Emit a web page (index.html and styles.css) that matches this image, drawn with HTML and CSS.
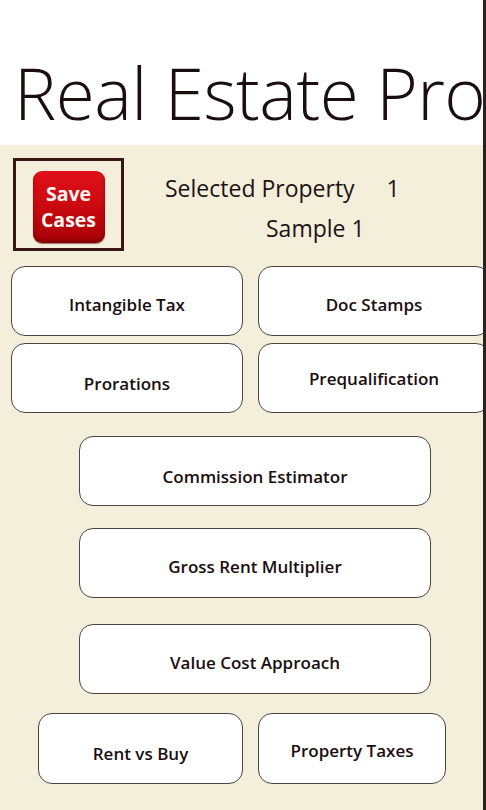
FILE: index.html
```html
<!DOCTYPE html>
<html lang="en">
<head>
  <meta charset="UTF-8" />
  <meta name="viewport" content="width=device-width, initial-scale=1.0"/>
  <title>Real Estate Pro</title>
  <link rel="stylesheet" href="styles.css">
</head>
<body>

  <div class="app">
    <!-- Page title -->
    <header class="title-bar">
      <h1 class="app-title">Real Estate Pro</h1>
    </header>

    <div class="content">
      <!-- Save button and selected property -->
      <div class="top-row">
        <div class="save-frame">
          <button class="save-btn">Save<br>Cases</button>
        </div>
        <div class="property-info">
          <div class="property-line">
            <span>Selected Property</span>
            <span class="property-num">1</span>
          </div>
          <div class="property-name">Sample 1</div>
        </div>
      </div>

      <!-- Calculators -->
      <div class="btn-row row-1">
        <button class="calc-btn half">Intangible Tax</button>
        <button class="calc-btn half">Doc Stamps</button>
      </div>

      <div class="btn-row row-2">
        <button class="calc-btn half low">Prorations</button>
        <button class="calc-btn half high">Prequalification</button>
      </div>

      <div class="btn-row row-3">
        <button class="calc-btn wide low">Commission Estimator</button>
      </div>

      <div class="btn-row row-4">
        <button class="calc-btn wide">Gross Rent Multiplier</button>
      </div>

      <div class="btn-row row-5">
        <button class="calc-btn wide">Value Cost Approach</button>
      </div>

      <div class="btn-row row-6">
        <button class="calc-btn small-left low">Rent vs Buy</button>
        <button class="calc-btn small-right">Property Taxes</button>
      </div>
    </div>

    <div class="edge"></div>
  </div>

</body>
</html>
```

FILE: styles.css
```css
body {
  margin: 0;
  font-family: "Open Sans", "Noto Sans", sans-serif;
  color: #1e1214;
  background-color: #f4efdb;
  overflow: hidden;
}

.app {
  position: relative;
  width: 486px;
  height: 810px;
  overflow: hidden;
}

.title-bar {
  background: white;
  height: 145px;
  overflow: hidden;
}

.app-title {
  margin: 0;
  padding: 57px 0 0 14px;
  font-size: 71px;
  font-weight: 300;
  letter-spacing: -0.5px;
  line-height: 1;
  white-space: nowrap;
  color: #1a0e10;
}

.content {
  background-color: #f4efdb;
  height: 665px;
}

.top-row {
  display: flex;
  padding: 13px 0 0 13px;
  height: 108px;
}

.save-frame {
  width: 105px;
  height: 87px;
  border: 3px solid #3a1712;
  display: flex;
  justify-content: center;
  align-items: flex-start;
}

.save-btn {
  margin-top: 10px;
  width: 72px;
  height: 72px;
  border: none;
  border-radius: 9px;
  background: linear-gradient(180deg, #e0101a 0%, #cc0a10 45%, #a80006 100%);
  box-shadow: inset 0 -3px 4px rgba(80, 0, 0, 0.45), 0 1px 1px rgba(60, 0, 0, 0.5);
  color: #fff4f0;
  font-family: "Open Sans", sans-serif;
  font-size: 19.5px;
  font-weight: 700;
  line-height: 26px;
  padding: 0;
}

.property-info {
  padding: 14px 0 0 41px;
  font-size: 23px;
}

.property-line {
  display: flex;
  gap: 32px;
  height: 40px;
}

.property-name {
  padding-left: 101px;
}

.btn-row {
  display: flex;
  gap: 15px;
}

.row-1 { margin: 0 0 0 11px; }
.row-2 { margin: 7px 0 0 11px; }
.row-3 { margin: 23px 0 0 79px; }
.row-4 { margin: 22px 0 0 79px; }
.row-5 { margin: 26px 0 0 79px; }
.row-6 { margin: 19px 0 0 38px; }

.calc-btn {
  flex: none;
  height: 70px;
  background: white;
  border: 1px solid #4a4444;
  border-radius: 14px;
  font-family: "Open Sans", sans-serif;
  font-size: 17px;
  font-weight: 600;
  color: #1a0e10;
  padding: 6px 0 0 0;
  cursor: pointer;
}

.calc-btn.low { padding-top: 10px; }
.calc-btn.high { padding-top: 0; }

.half { width: 232px; }
.wide { width: 352px; }
.small-left { width: 205px; height: 71px; }
.small-right { width: 188px; height: 71px; padding-top: 3px; }

.edge {
  position: absolute;
  top: 0;
  right: 0;
  width: 3px;
  height: 100%;
  background: #2a2222;
}
```
